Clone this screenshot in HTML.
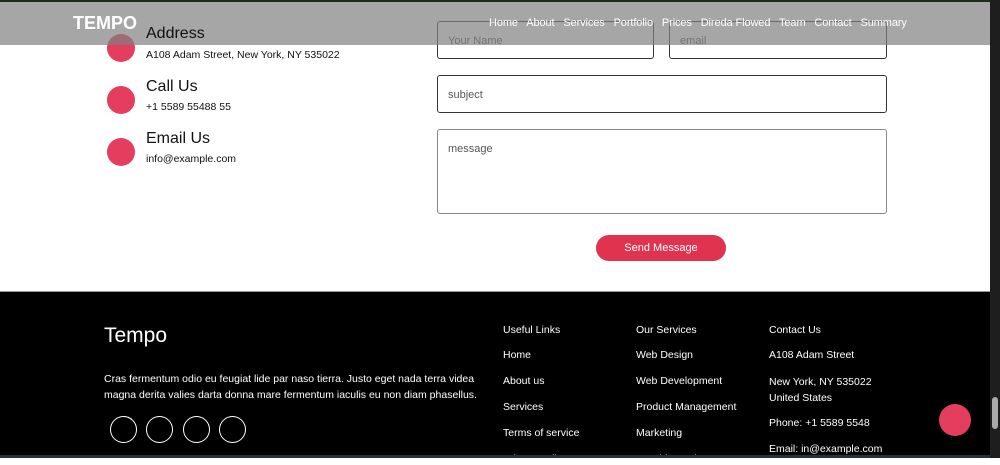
<!DOCTYPE html>
<html><head><style>
*{margin:0;padding:0;box-sizing:border-box}
body{width:1000px;height:458px;overflow:hidden;position:relative;background:#fff;font-family:"Liberation Sans",sans-serif;color:#111}
.a{position:absolute;white-space:nowrap}
.dot{position:absolute;width:28px;height:28px;border-radius:50%;background:#e43d5e}
.in{position:absolute;border:1.5px solid #333;border-radius:3px;font-size:11px;color:#555;padding-left:10px}
.f{position:absolute;color:#fff;font-size:10.5px;white-space:nowrap}
.sc{position:absolute;width:27px;height:27px;border:1px solid #fff;border-radius:50%;top:416px}
</style></head><body>
<div class="a" style="left:0;top:0;width:1000px;height:2px;background:#1f2d1c"></div>
<div class="dot" style="left:107px;top:34px"></div>
<div class="a" style="left:146px;top:49px;font-size:10.5px">A108 Adam Street, New York, NY 535022</div>
<div class="dot" style="left:107px;top:86px"></div>
<div class="a" style="left:146px;top:78px;font-size:16px">Call Us</div>
<div class="a" style="left:146px;top:101px;font-size:10.5px">+1 5589 55488 55</div>
<div class="dot" style="left:107px;top:138px"></div>
<div class="a" style="left:146px;top:130px;font-size:16px">Email Us</div>
<div class="a" style="left:146px;top:153px;font-size:10.5px">info@example.com</div>
<div class="in" style="left:437px;top:21px;width:217px;height:38px;padding-top:13px">Your Name</div>
<div class="in" style="left:669px;top:21px;width:218px;height:38px;padding-top:13px">email</div>
<div class="in" style="left:437px;top:75px;width:450px;height:38px;padding-top:13px">subject</div>
<div class="in" style="left:437px;top:129px;width:450px;height:85px;padding-top:13px;border-color:#888;border-width:1px">message</div>
<div class="a" style="left:596px;top:235px;width:130px;height:26px;border-radius:13px;background:#e0334f;color:#fff;font-size:11px;text-align:center;line-height:26px">Send Message</div>
<div class="a" style="left:0;top:2px;width:990px;height:43px;background:rgba(128,128,128,.7)"></div>
<div class="a" style="left:146px;top:25px;font-size:16px;color:#111">Address</div>
<div class="a" style="left:73px;top:13px;font-size:18px;font-weight:bold;color:#fff">TEMPO</div>
<div class="a" style="left:489px;top:17px;font-size:11px;letter-spacing:-0.1px;color:#fff">Home&nbsp;&nbsp; About&nbsp;&nbsp; Services&nbsp;&nbsp; Portfolio&nbsp;&nbsp; Prices&nbsp;&nbsp; Direda Flowed&nbsp;&nbsp; Team&nbsp;&nbsp; Contact&nbsp;&nbsp; Summary</div>
<div class="a" style="left:0;top:291px;width:990px;height:167px;background:#000;border-top:1px solid #999"></div>
<div class="f" style="left:104px;top:324px;font-size:21px">Tempo</div>
<div class="f" style="left:104px;top:371px;line-height:16px">Cras fermentum odio eu feugiat lide par naso tierra. Justo eget nada terra videa<br>magna derita valies darta donna mare fermentum iaculis eu non diam phasellus.</div>
<div class="sc" style="left:110px"></div><div class="sc" style="left:146px"></div><div class="sc" style="left:183px"></div><div class="sc" style="left:219px"></div>
<div class="f" style="left:503px;top:324px">Useful Links</div>
<div class="f" style="left:503px;top:349px">Home</div>
<div class="f" style="left:503px;top:375px">About us</div>
<div class="f" style="left:503px;top:401px">Services</div>
<div class="f" style="left:503px;top:427px">Terms of service</div>
<div class="f" style="left:503px;top:453px">Privacy policy</div>
<div class="f" style="left:636px;top:324px">Our Services</div>
<div class="f" style="left:636px;top:349px">Web Design</div>
<div class="f" style="left:636px;top:375px">Web Development</div>
<div class="f" style="left:636px;top:401px">Product Management</div>
<div class="f" style="left:636px;top:427px">Marketing</div>
<div class="f" style="left:636px;top:453px">Graphic Design</div>
<div class="f" style="left:769px;top:324px">Contact Us</div>
<div class="f" style="left:769px;top:349px">A108 Adam Street</div>
<div class="f" style="left:769px;top:374px;line-height:16px">New York, NY 535022<br>United States</div>
<div class="f" style="left:769px;top:417px">Phone: +1 5589 5548</div>
<div class="f" style="left:769px;top:443px">Email: in@example.com</div>
<div class="a" style="left:939px;top:404px;width:32px;height:32px;border-radius:50%;background:#e43d5e"></div>
<div class="a" style="left:0;top:455px;width:990px;height:3px;background:#1c3440"></div>
<div class="a" style="left:990px;top:0;width:10px;height:458px;background:#1e1e1e"></div>
<div class="a" style="left:992px;top:397px;width:6px;height:32px;background:#aaa;border-radius:3px"></div>
</body></html>
